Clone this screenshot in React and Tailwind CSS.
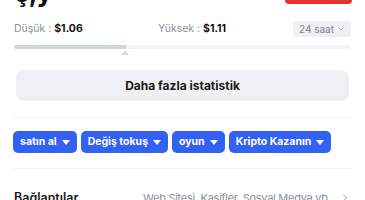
import { ChevronDown, ChevronRight } from 'lucide-react';

function Caret() {
  return (
    <svg width="8" height="5" viewBox="0 0 8 5" className="ml-[5px]">
      <path d="M0 0h8L4 5z" fill="white" />
    </svg>
  );
}

const actions = ["satın al", "Değiş tokuş", "oyun", "Kripto Kazanın"];

export default function App() {
  return (
    <div className="w-[365px] h-[200px] overflow-hidden bg-white text-[#111] font-['Inter',sans-serif]">
      <div className="flex justify-between items-start h-[14px]">
        <div className="ml-[14px] -mt-[22px] text-[26px] font-bold leading-[30px] tracking-tight">ç,y</div>
        <div className="mr-[13px] w-[67px] h-[4px] bg-[#e5322f] rounded-b-[6px]"></div>
      </div>

      <div className="px-[14px]">
        <div className="flex items-center h-[30px] text-[10.5px]">
          <div className="w-[144px]">
            <span className="text-[#8b9099]">Düşük : </span>
            <span className="font-bold">$1.06</span>
          </div>
          <div className="flex-1">
            <span className="text-[#8b9099]">Yüksek : </span>
            <span className="font-bold">$1.11</span>
          </div>
          <div className="flex items-center h-[16px] px-[6px] bg-[#eef0f3] rounded-[3px] text-[10px] text-[#7b808a]">
            24 saat
            <ChevronDown size={8} strokeWidth={2} className="ml-[3px]" />
          </div>
        </div>

        <div className="mt-[1px] h-[4px] w-full bg-[#f1f3f5] rounded-full flex">
          <div className="h-full w-[112px] bg-[#cfd6de] rounded-l-full"></div>
        </div>
        <div className="pl-[107px] h-[6px] flex items-end">
          <svg width="8" height="4" viewBox="0 0 8 4">
            <path d="M4 0L8 4H0z" fill="#d3d8de" />
          </svg>
        </div>

        <div className="mt-[15px] mx-[2px] h-[31px] bg-[#eef0f3] rounded-[8px] flex items-center justify-center text-[12px] font-bold text-[#1a1a1a]">
          Daha fazla istatistik
        </div>

        <div className="mt-[16px] h-px bg-[#f1f2f4]"></div>

        <div className="mt-[13px] flex gap-[4px] -ml-[1px]">
          {actions.map((a) => (
            <div
              key={a}
              className="h-[22px] px-[7px] flex items-center bg-[#3361f2] rounded-[5px] text-white text-[10.5px] font-bold"
            >
              {a}
              <Caret />
            </div>
          ))}
        </div>

        <div className="mt-[15px] h-px bg-[#f1f2f4]"></div>

        <div className="mt-[20px] flex items-center whitespace-nowrap">
          <div className="w-[129px] shrink-0 text-[12.5px] font-semibold text-[#1a1a1a]">Bağlantılar</div>
          <div className="flex-1 text-[#8b9099] text-[11px] tracking-tight">Web Sitesi, Kaşifler, Sosyal Medya vb.</div>
          <ChevronRight size={12} className="shrink-0 text-[#9aa0a8]" />
        </div>
      </div>
    </div>
  );
}
